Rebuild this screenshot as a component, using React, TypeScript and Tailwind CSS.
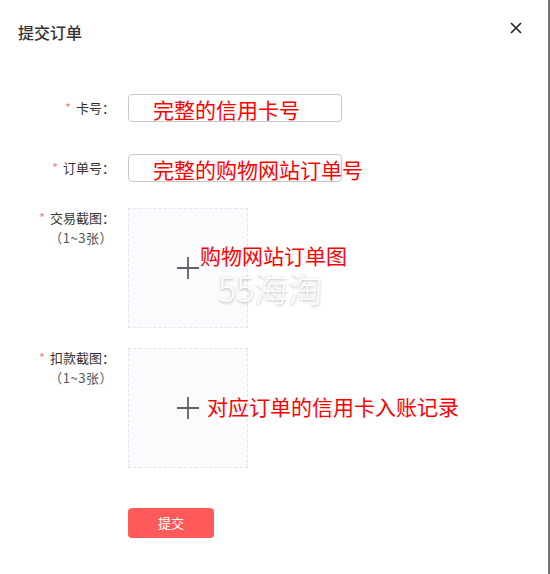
import React from 'react';

const font = { fontFamily: "'Noto Sans CJK SC', 'Noto Sans', sans-serif" };

const Label = ({ text, sub }: { text: string; sub?: boolean }) => (
    <div className={`w-[128px] shrink-0 pr-[13px] text-right text-[13px] text-[#333] ${sub ? 'leading-[20px]' : 'leading-[28px]'}`}>
        <span className="text-[#f78989] mr-[5px]">*</span>
        {text}
        {sub && <div className="text-[#555] tracking-[0.5px] pr-[2px]">（1~3张）</div>}
    </div>
);

const Note = ({ children, className }: { children: React.ReactNode; className: string }) => (
    <span className={`absolute whitespace-nowrap text-[21px] leading-none text-[#ff0000] ${className}`}>{children}</span>
);

const Upload = () => (
    <div className="w-[120px] h-[120px] border border-dashed border-[#e2e4ea] bg-[#fafbfd] flex items-center justify-center">
        <svg width="24" height="24" viewBox="0 0 24 24" className="text-[#606266]">
            <path d="M12 1v22M1 12h22" stroke="currentColor" strokeWidth="1.8" />
        </svg>
    </div>
);

export default function App() {
    return (
        <div className="w-[550px] h-[574px] flex bg-white" style={font}>
            <div className="w-[548px] h-full relative">
                <header className="flex items-center justify-between pl-[18px] pr-[26px] pt-[21px]">
                    <h2 className="text-[16px] leading-[22px] font-medium text-[#333]">提交订单</h2>
                    <svg width="12" height="12" viewBox="0 0 12 12" className="-mt-[8px]">
                        <path d="M1 1l10 10M11 1L1 11" stroke="#222" strokeWidth="1.6" />
                    </svg>
                </header>

                <div className="flex mt-[51px]">
                    <Label text="卡号：" />
                    <div className="relative w-[214px] h-[28px] border border-[#c8c8c8] rounded-[4px]">
                        <Note className="left-[24px] top-[4px]">完整的信用卡号</Note>
                    </div>
                </div>

                <div className="flex mt-[32px]">
                    <Label text="订单号：" />
                    <div className="relative w-[214px] h-[28px] border border-[#c8c8c8] rounded-[4px]">
                        <Note className="left-[24px] top-[4px]">完整的购物网站订单号</Note>
                    </div>
                </div>

                <div className="flex mt-[26px]">
                    <Label text="交易截图：" sub />
                    <div className="relative">
                        <Upload />
                        <Note className="left-[72px] top-[37px]">购物网站订单图</Note>
                        {/* watermark from the screenshot */}
                        <span className="absolute left-[90px] top-[65px] whitespace-nowrap text-[34px] leading-[30px] font-light text-white [text-shadow:0_1px_3px_rgba(0,0,0,0.3)]">
                            55海淘
                        </span>
                    </div>
                </div>

                <div className="flex mt-[20px]">
                    <Label text="扣款截图：" sub />
                    <div className="relative">
                        <Upload />
                        <Note className="left-[79px] top-[48px]">对应订单的信用卡入账记录</Note>
                    </div>
                </div>

                <div className="pl-[128px] mt-[40px]">
                    <button className="w-[86px] h-[30px] rounded-[4px] bg-[#ff5a5a] text-white text-[13px]">提交</button>
                </div>
            </div>
            <div className="w-[2px] h-full bg-[#777]" />
        </div>
    );
}
